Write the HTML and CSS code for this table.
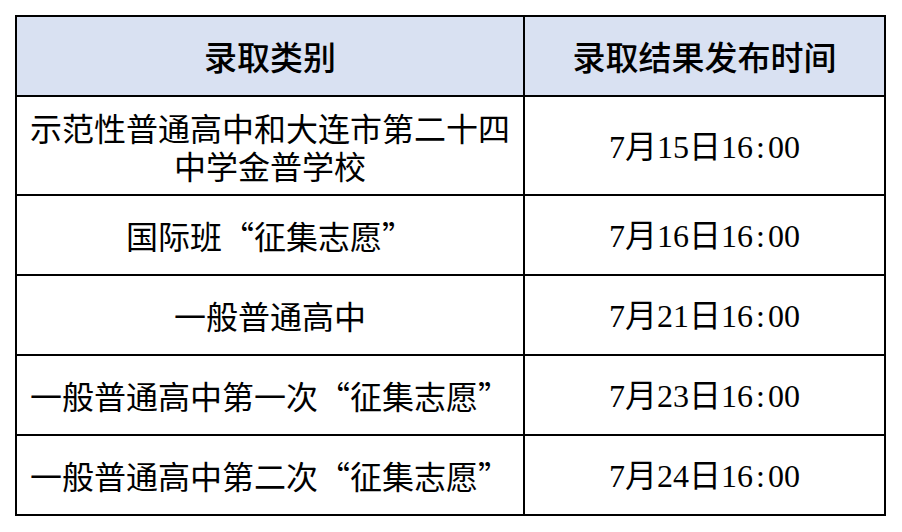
FILE: index.html
```html
<!DOCTYPE html>
<html lang="zh-CN">
<head>
<meta charset="utf-8">
<link rel="stylesheet" href="styles.css">
</head>
<body>
<div class="sheet">
  <div class="cell head">录取类别</div>
  <div class="cell head">录取结果发布时间</div>

  <div class="cell tall">示范性普通高中和大连市第二十四中学金普学校</div>
  <div class="cell date tall">7月15日16<span class="colon">:</span>00</div>

  <div class="cell">国际班“征集志愿”</div>
  <div class="cell date">7月16日16<span class="colon">:</span>00</div>

  <div class="cell">一般普通高中</div>
  <div class="cell date">7月21日16<span class="colon">:</span>00</div>

  <div class="cell">一般普通高中第一次“征集志愿”</div>
  <div class="cell date">7月23日16<span class="colon">:</span>00</div>

  <div class="cell">一般普通高中第二次“征集志愿”</div>
  <div class="cell date">7月24日16<span class="colon">:</span>00</div>
</div>
</body>
</html>
```
FILE: styles.css
```css
html, body {
  margin: 0;
  padding: 0;
  background: #ffffff;
}

body {
  padding: 15px 0 0 15px;
}

.sheet {
  display: grid;
  grid-template-columns: 508px 361px;
  grid-template-rows: 80px 99px 80px 80px 80px 80px;
  width: 869px;
  border-top: 2px solid #000;
  border-left: 2px solid #000;
  font-family: "Noto Sans CJK SC", sans-serif;
  font-size: 32px;
  color: #000;
}

.cell {
  box-sizing: border-box;
  border-right: 2px solid #000;
  border-bottom: 2px solid #000;
  display: flex;
  align-items: center;
  justify-content: center;
  text-align: center;
  padding: 0 8px;
  line-height: 38px;
}

.head {
  background: #d9e1f2;
  font-size: 33px;
  font-weight: 500;
}

.date {
  font-family: "Liberation Serif", "Noto Sans CJK SC", serif;
  padding-top: 2px;
}

.colon {
  margin: 0 3px;
}
```
